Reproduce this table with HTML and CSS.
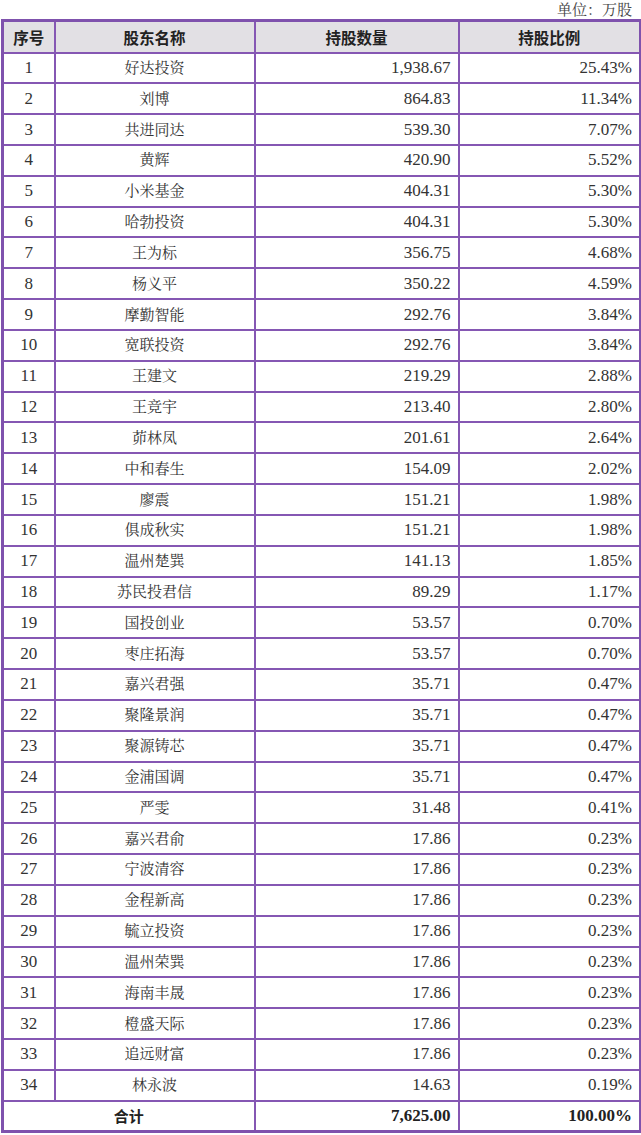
FILE: index.html
```html
<!DOCTYPE html>
<html lang="zh-CN">
<head>
<meta charset="utf-8">
<title>股东持股情况</title>
<link rel="stylesheet" href="styles.css">
</head>
<body>
<div class="page">
  <div class="unit">单位：万股</div>
  <table class="holders">
    <colgroup>
      <col class="c-no"><col class="c-name"><col class="c-qty"><col class="c-pct">
    </colgroup>
    <thead>
      <tr><th>序号</th><th>股东名称</th><th>持股数量</th><th>持股比例</th></tr>
    </thead>
    <tbody>
      <tr><td class="no">1</td><td class="name">好达投资</td><td class="num">1,938.67</td><td class="num">25.43%</td></tr>
      <tr><td class="no">2</td><td class="name">刘博</td><td class="num">864.83</td><td class="num">11.34%</td></tr>
      <tr><td class="no">3</td><td class="name">共进同达</td><td class="num">539.30</td><td class="num">7.07%</td></tr>
      <tr><td class="no">4</td><td class="name">黄辉</td><td class="num">420.90</td><td class="num">5.52%</td></tr>
      <tr><td class="no">5</td><td class="name">小米基金</td><td class="num">404.31</td><td class="num">5.30%</td></tr>
      <tr><td class="no">6</td><td class="name">哈勃投资</td><td class="num">404.31</td><td class="num">5.30%</td></tr>
      <tr><td class="no">7</td><td class="name">王为标</td><td class="num">356.75</td><td class="num">4.68%</td></tr>
      <tr><td class="no">8</td><td class="name">杨义平</td><td class="num">350.22</td><td class="num">4.59%</td></tr>
      <tr><td class="no">9</td><td class="name">摩勤智能</td><td class="num">292.76</td><td class="num">3.84%</td></tr>
      <tr><td class="no">10</td><td class="name">宽联投资</td><td class="num">292.76</td><td class="num">3.84%</td></tr>
      <tr><td class="no">11</td><td class="name">王建文</td><td class="num">219.29</td><td class="num">2.88%</td></tr>
      <tr><td class="no">12</td><td class="name">王竞宇</td><td class="num">213.40</td><td class="num">2.80%</td></tr>
      <tr><td class="no">13</td><td class="name">茆林凤</td><td class="num">201.61</td><td class="num">2.64%</td></tr>
      <tr><td class="no">14</td><td class="name">中和春生</td><td class="num">154.09</td><td class="num">2.02%</td></tr>
      <tr><td class="no">15</td><td class="name">廖震</td><td class="num">151.21</td><td class="num">1.98%</td></tr>
      <tr><td class="no">16</td><td class="name">俱成秋实</td><td class="num">151.21</td><td class="num">1.98%</td></tr>
      <tr><td class="no">17</td><td class="name">温州楚巽</td><td class="num">141.13</td><td class="num">1.85%</td></tr>
      <tr><td class="no">18</td><td class="name">苏民投君信</td><td class="num">89.29</td><td class="num">1.17%</td></tr>
      <tr><td class="no">19</td><td class="name">国投创业</td><td class="num">53.57</td><td class="num">0.70%</td></tr>
      <tr><td class="no">20</td><td class="name">枣庄拓海</td><td class="num">53.57</td><td class="num">0.70%</td></tr>
      <tr><td class="no">21</td><td class="name">嘉兴君强</td><td class="num">35.71</td><td class="num">0.47%</td></tr>
      <tr><td class="no">22</td><td class="name">聚隆景润</td><td class="num">35.71</td><td class="num">0.47%</td></tr>
      <tr><td class="no">23</td><td class="name">聚源铸芯</td><td class="num">35.71</td><td class="num">0.47%</td></tr>
      <tr><td class="no">24</td><td class="name">金浦国调</td><td class="num">35.71</td><td class="num">0.47%</td></tr>
      <tr><td class="no">25</td><td class="name">严雯</td><td class="num">31.48</td><td class="num">0.41%</td></tr>
      <tr><td class="no">26</td><td class="name">嘉兴君俞</td><td class="num">17.86</td><td class="num">0.23%</td></tr>
      <tr><td class="no">27</td><td class="name">宁波清容</td><td class="num">17.86</td><td class="num">0.23%</td></tr>
      <tr><td class="no">28</td><td class="name">金程新高</td><td class="num">17.86</td><td class="num">0.23%</td></tr>
      <tr><td class="no">29</td><td class="name">毓立投资</td><td class="num">17.86</td><td class="num">0.23%</td></tr>
      <tr><td class="no">30</td><td class="name">温州荣巽</td><td class="num">17.86</td><td class="num">0.23%</td></tr>
      <tr><td class="no">31</td><td class="name">海南丰晟</td><td class="num">17.86</td><td class="num">0.23%</td></tr>
      <tr><td class="no">32</td><td class="name">橙盛天际</td><td class="num">17.86</td><td class="num">0.23%</td></tr>
      <tr><td class="no">33</td><td class="name">追远财富</td><td class="num">17.86</td><td class="num">0.23%</td></tr>
      <tr><td class="no">34</td><td class="name">林永波</td><td class="num">14.63</td><td class="num">0.19%</td></tr>
    </tbody>
    <tfoot>
      <tr><td class="total-label" colspan="2">合计</td><td class="num strong">7,625.00</td><td class="num strong">100.00%</td></tr>
    </tfoot>
  </table>
</div>
</body>
</html>
```

FILE: styles.css
```css
html, body {
  margin: 0;
  padding: 0;
  background: #ffffff;
}

.page {
  width: 641px;
  padding: 0 0 0 1px;
  box-sizing: border-box;
  font-family: "Liberation Serif", "Noto Serif CJK SC", "Noto Sans CJK SC", serif;
  color: #333333;
}

.unit {
  height: 19px;
  line-height: 21px;
  text-align: right;
  font-size: 15px;
  padding-right: 9px;
  color: #444444;
}

.holders {
  width: 638px;
  border-collapse: collapse;
  table-layout: fixed;
  border: 3px solid #7f52ad;
}

.c-no { width: 52px; }
.c-name { width: 200px; }
.c-qty { width: 204px; }
.c-pct { width: 182px; }

.holders th,
.holders td {
  border: 2px solid #8557b3;
  padding: 0;
  font-size: 15px;
  line-height: 18px;
}

.holders thead tr { height: 32px; }
.holders tbody tr,
.holders tfoot tr { height: 30.83px; }

.holders th {
  background: #e2e0e4;
  font-family: "Noto Sans CJK SC", sans-serif;
  font-weight: 700;
  font-size: 15.5px;
  color: #222222;
  text-align: center;
}

.holders td.no,
.holders td.num {
  font-size: 17px;
}

.no,
.name {
  text-align: center;
}

.num {
  text-align: right;
  padding-right: 7px !important;
}

.total-label {
  text-align: center;
  font-family: "Noto Sans CJK SC", sans-serif;
  font-weight: 700;
  color: #222222;
}

.strong {
  font-weight: 700;
  color: #222222;
}
```
